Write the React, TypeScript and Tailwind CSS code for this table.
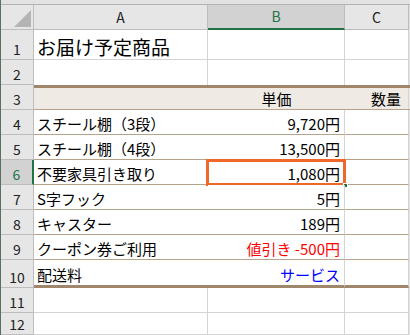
import type { ReactNode } from 'react';

type Line = { n: number; a?: ReactNode; b?: ReactNode; bClass?: string };

const items: Line[] = [
  { n: 4, a: 'スチール棚（3段）', b: '9,720円' },
  { n: 5, a: 'スチール棚（4段）', b: '13,500円' },
  { n: 6, a: '不要家具引き取り', b: '1,080円' },
  { n: 7, a: 'S字フック', b: '5円' },
  { n: 8, a: 'キャスター', b: '189円' },
  { n: 9, a: 'クーポン券ご利用', b: '値引き -500円', bClass: 'text-[#ff0000]' },
  { n: 10, a: '配送料', b: 'サービス', bClass: 'text-[#0000ff]' },
];

function RowHead({ n, active, h = 'h-[25px]' }: { n: number; active?: boolean; h?: string }) {
  return (
    <div
      className={`w-[33px] ${h} shrink-0 flex items-end justify-center pb-[3px] border-b border-b-[#bdbdbd] text-[14px] leading-none ${
        active
          ? 'bg-[#d2d2d2] text-[#217346] border-r-2 border-r-[#217346]'
          : 'bg-[#e6e6e6] text-[#222222] border-r border-r-[#bdbdbd]'
      }`}
    >
      {n}
    </div>
  );
}

function ColHead({ label, w, active }: { label: string; w: string; active?: boolean }) {
  return (
    <div
      className={`${w} h-full shrink-0 flex items-center justify-center text-[14px] border-r border-r-[#bdbdbd] ${
        active
          ? 'bg-[#d2d2d2] text-[#217346] border-b-2 border-b-[#217346]'
          : 'bg-[#e6e6e6] text-[#222222] border-b border-b-[#bdbdbd]'
      }`}
    >
      {label}
    </div>
  );
}

function EmptyRow({ n, h = 'h-[25px]', noBottom }: { n: number; h?: string; noBottom?: boolean }) {
  const b = noBottom ? '' : 'border-b';
  return (
    <div className={`flex ${h}`}>
      <RowHead n={n} h={h} />
      <div className={`w-[174px] shrink-0 border-r ${b} border-[#d4d4d4] bg-white`} />
      <div className={`w-[137px] shrink-0 border-r ${b} border-[#d4d4d4] bg-white`} />
      <div className={`w-[64px] shrink-0 border-r ${b} border-[#d4d4d4] bg-white`} />
    </div>
  );
}

export default function App() {
  return (
    <div className="w-[410px] h-[335px] overflow-hidden bg-[#e2e2e2] border-l border-l-[#5b6e62] font-['Noto_Sans_CJK_JP','Liberation_Sans',sans-serif] text-black">
      <div className="h-[5px] border-b border-b-[#b3b3b3] bg-[#e2e2e2]" />

      {/* column headers */}
      <div className="flex h-[25px]">
        <div className="w-[33px] h-full shrink-0 relative bg-[#e6e6e6] border-r border-b border-[#bdbdbd]">
          <svg className="absolute left-[13px] top-[5px]" width="18" height="18" viewBox="0 0 18 18">
            <polygon points="17,0 17,17 0,17" fill="#b4b4b4" />
          </svg>
        </div>
        <ColHead label="A" w="w-[174px]" />
        <ColHead label="B" w="w-[137px]" active />
        <ColHead label="C" w="w-[64px]" />
      </div>

      {/* row 1: title */}
      <div className="flex h-[30px]">
        <RowHead n={1} h="h-[30px]" />
        <div className="w-[174px] shrink-0 border-r border-b border-[#d4d4d4] bg-white relative">
          <span className="absolute left-[3px] bottom-[3px] text-[19px] leading-none whitespace-nowrap">
            お届け予定商品
          </span>
        </div>
        <div className="w-[137px] shrink-0 border-r border-b border-[#d4d4d4] bg-white" />
        <div className="w-[64px] shrink-0 border-r border-b border-[#d4d4d4] bg-white" />
      </div>

      <EmptyRow n={2} noBottom />

      {/* row 3: table heading */}
      <div className="flex h-[25px]">
        <RowHead n={3} />
        <div className="flex flex-1 bg-[#efebe4] border-t-[3px] border-t-[#a0866a] border-b border-b-[#b5a38b] text-[15px] leading-none">
          <div className="w-[174px] shrink-0" />
          <div className="w-[137px] shrink-0 flex items-end justify-center pb-[3px]">単価</div>
          <div className="w-[64px] shrink-0 flex items-end justify-end pb-[3px] pr-[7px] border-r border-r-[#d4d4d4]">
            数量
          </div>
        </div>
      </div>

      {items.map((it) => {
        const last = it.n === 10;
        const h = last ? 'h-[28px]' : 'h-[25px]';
        const bottom = last ? 'border-b-[3px] border-b-[#a0866a]' : 'border-b border-b-[#b5a38b]';
        return (
          <div key={it.n} className={`flex ${h}`}>
            <RowHead n={it.n} h={h} active={it.n === 6} />
            <div className={`w-[174px] shrink-0 bg-white ${bottom} flex items-end pl-[3px] pb-[3px] text-[15px] leading-none whitespace-nowrap`}>
              {it.a}
            </div>
            <div
              className={`w-[137px] shrink-0 bg-white relative ${bottom} border-r border-r-[#d4d4d4] flex items-end justify-end pr-[4px] pb-[3px] text-[15px] leading-none whitespace-nowrap ${
                it.bClass ?? ''
              }`}
            >
              {it.b}
              {it.n === 6 && (
                <>
                  <div className="absolute -left-[2px] -top-[1px] -right-[2px] -bottom-[2px] border-[3px] border-[#f0672a]" />
                  <div className="absolute -right-[4px] -bottom-[4px] w-[5px] h-[5px] bg-[#217346] border border-white" />
                </>
              )}
            </div>
            <div className={`w-[64px] shrink-0 bg-white ${bottom} border-r border-r-[#d4d4d4]`} />
          </div>
        );
      })}

      <EmptyRow n={11} />
      <EmptyRow n={12} h="h-[22px]" />
    </div>
  );
}
